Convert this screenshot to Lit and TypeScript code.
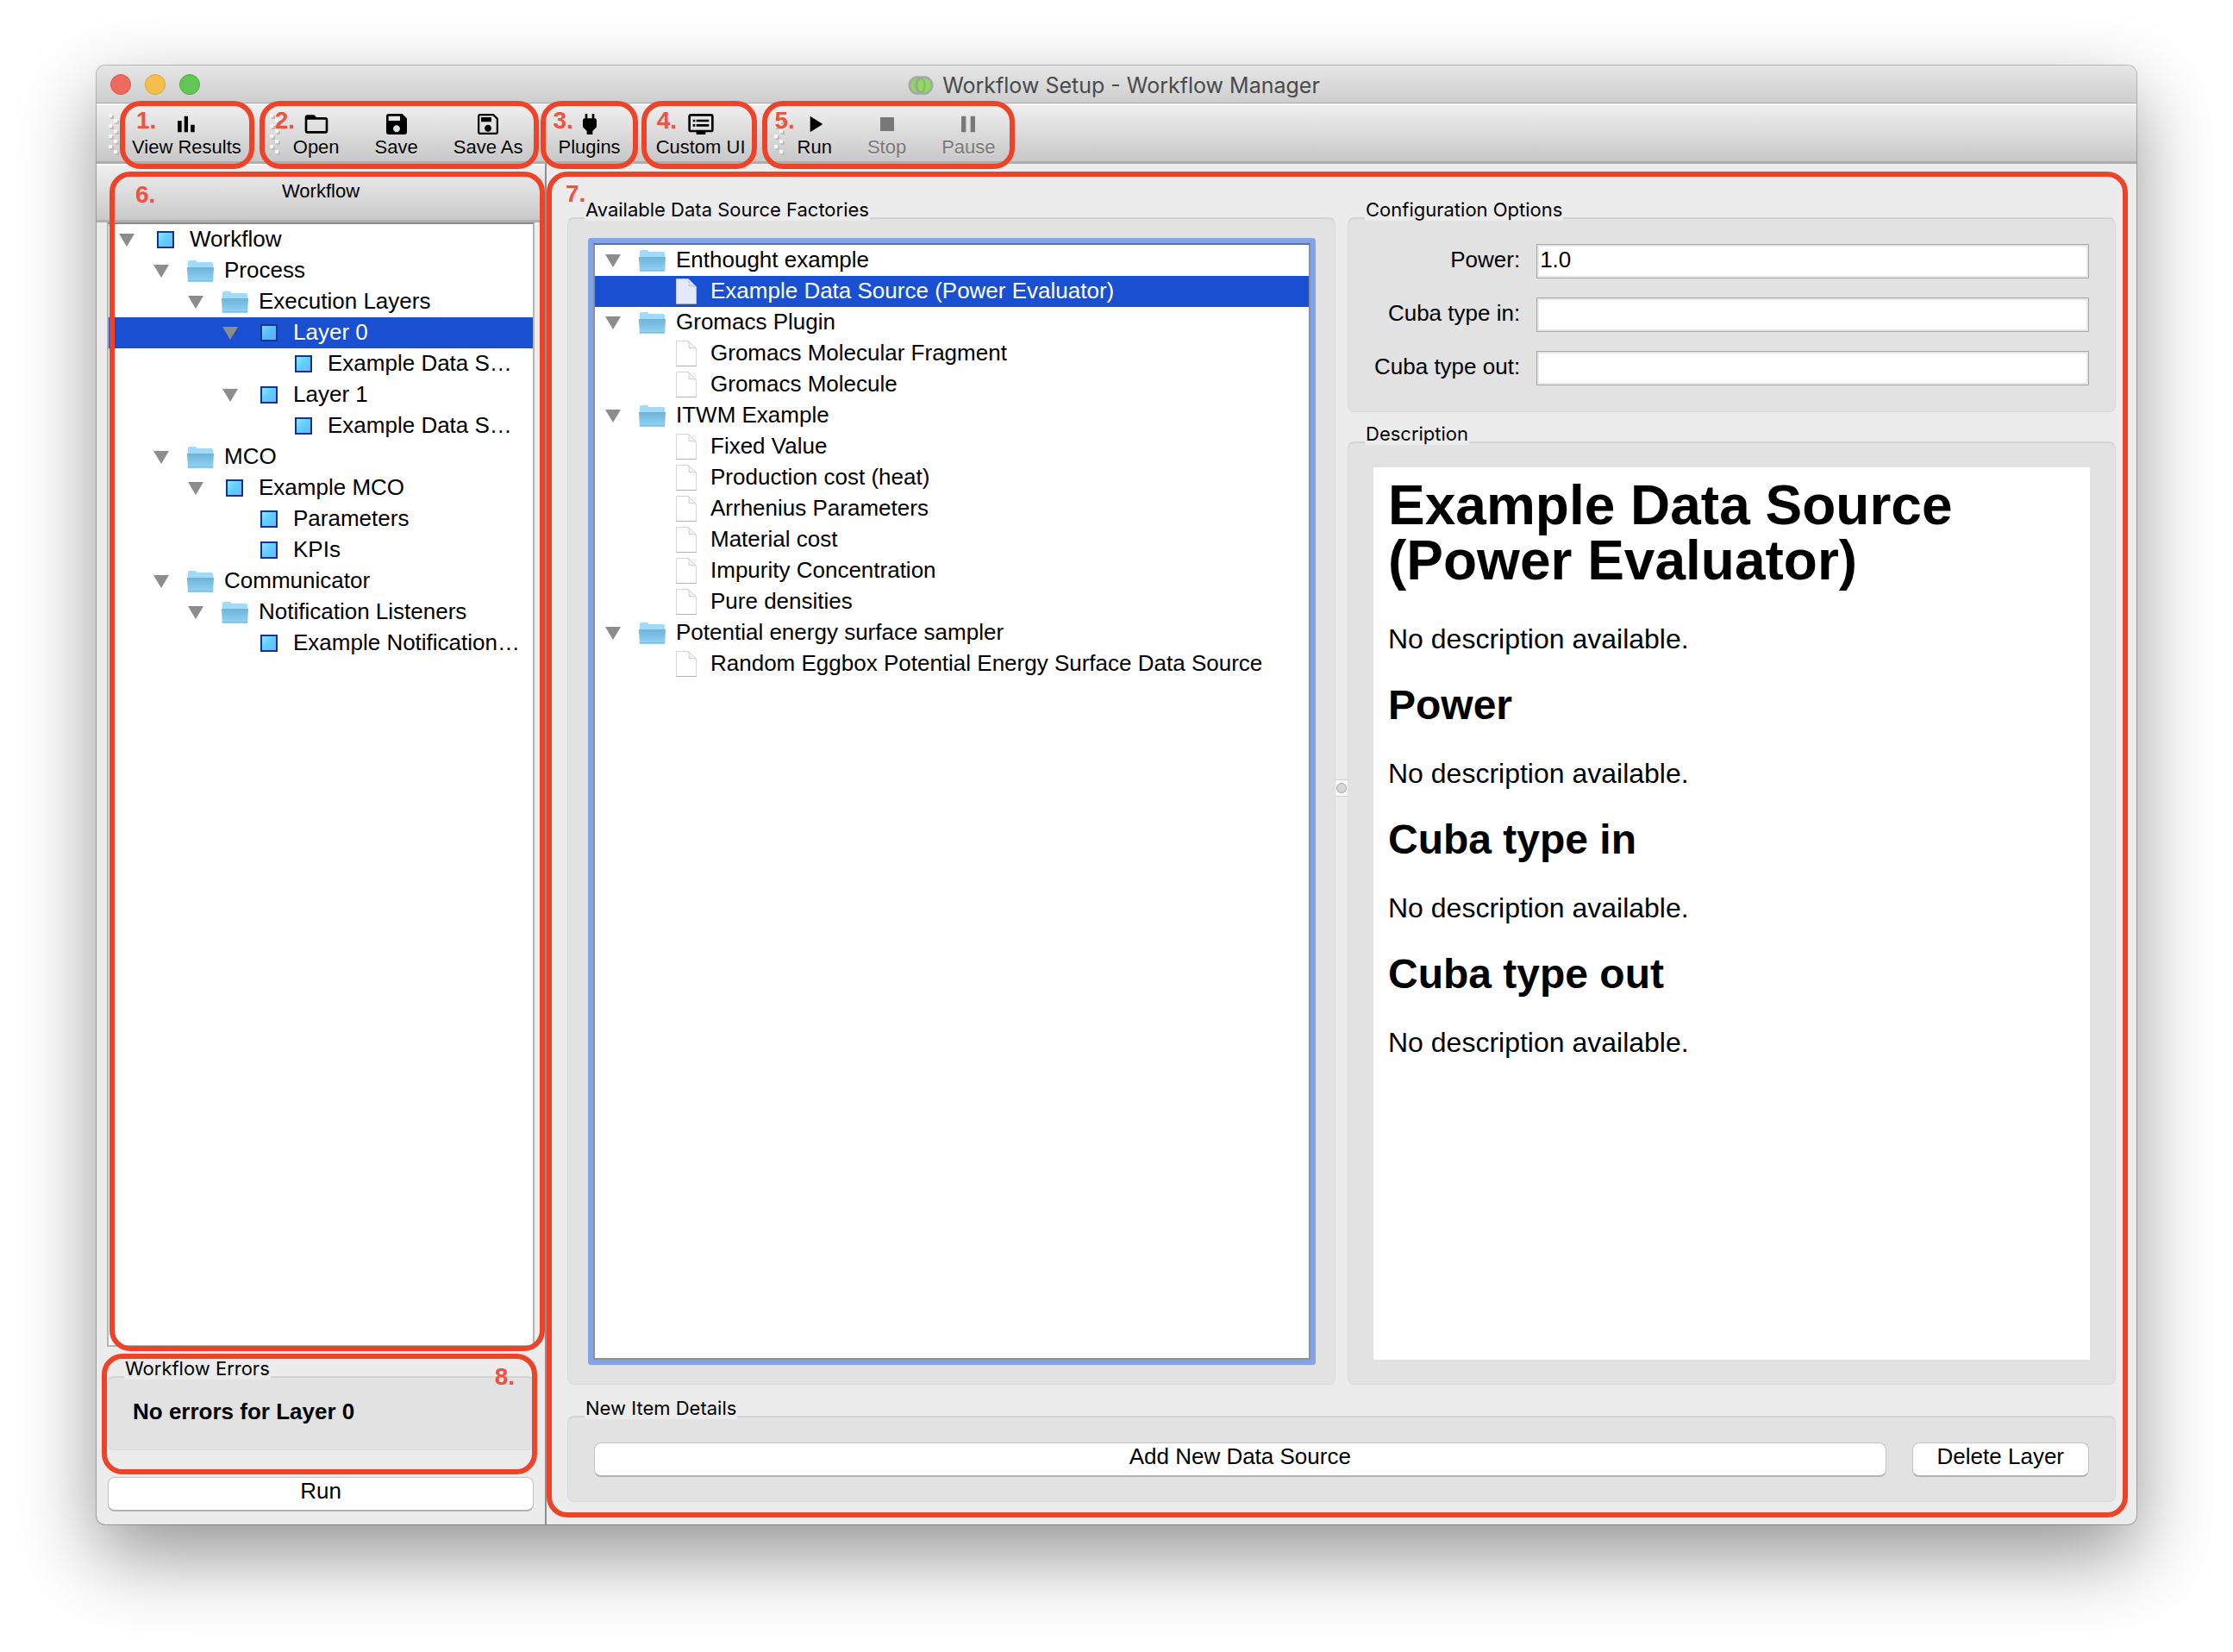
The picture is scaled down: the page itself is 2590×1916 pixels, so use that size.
import { LitElement, html, svg, css, nothing, TemplateResult } from "lit";
import { customElement, property } from "lit/decorators.js";
import { classMap } from "lit/directives/class-map.js";

type IconName = "square" | "folder" | "doc";

interface TreeNode {
  label: string;
  level: number;
  icon: IconName;
  open?: boolean;
  selected?: boolean;
}

const WORKFLOW: TreeNode[] = [
  { label: "Workflow", level: 0, icon: "square", open: true },
  { label: "Process", level: 1, icon: "folder", open: true },
  { label: "Execution Layers", level: 2, icon: "folder", open: true },
  { label: "Layer 0", level: 3, icon: "square", open: true, selected: true },
  { label: "Example Data S…", level: 4, icon: "square" },
  { label: "Layer 1", level: 3, icon: "square", open: true },
  { label: "Example Data S…", level: 4, icon: "square" },
  { label: "MCO", level: 1, icon: "folder", open: true },
  { label: "Example MCO", level: 2, icon: "square", open: true },
  { label: "Parameters", level: 3, icon: "square" },
  { label: "KPIs", level: 3, icon: "square" },
  { label: "Communicator", level: 1, icon: "folder", open: true },
  { label: "Notification Listeners", level: 2, icon: "folder", open: true },
  { label: "Example Notification…", level: 3, icon: "square" },
];

const FACTORIES: TreeNode[] = [
  { label: "Enthought example", level: 0, icon: "folder", open: true },
  { label: "Example Data Source (Power Evaluator)", level: 1, icon: "doc", selected: true },
  { label: "Gromacs Plugin", level: 0, icon: "folder", open: true },
  { label: "Gromacs Molecular Fragment", level: 1, icon: "doc" },
  { label: "Gromacs Molecule", level: 1, icon: "doc" },
  { label: "ITWM Example", level: 0, icon: "folder", open: true },
  { label: "Fixed Value", level: 1, icon: "doc" },
  { label: "Production cost (heat)", level: 1, icon: "doc" },
  { label: "Arrhenius Parameters", level: 1, icon: "doc" },
  { label: "Material cost", level: 1, icon: "doc" },
  { label: "Impurity Concentration", level: 1, icon: "doc" },
  { label: "Pure densities", level: 1, icon: "doc" },
  { label: "Potential energy surface sampler", level: 0, icon: "folder", open: true },
  { label: "Random Eggbox Potential Energy Surface Data Source", level: 1, icon: "doc" },
];

const TREE_ICONS: Record<IconName, TemplateResult> = {
  square: html`<svg class="icon" viewBox="0 0 32 32" aria-hidden="true">
    <defs>
      <linearGradient id="sq" x1="0" y1="0" x2="1" y2="1">
        <stop offset="0" stop-color="#a5e6fb" />
        <stop offset=".45" stop-color="#5fd0ff" />
        <stop offset="1" stop-color="#6fb4fb" />
      </linearGradient>
    </defs>
    <rect x="7" y="7" width="18" height="18" fill="url(#sq)" stroke="#17338f" stroke-width="2" />
  </svg>`,
  folder: html`<svg class="icon" viewBox="0 0 32 32" aria-hidden="true">
    <defs>
      <linearGradient id="fo" x1="0" y1="0" x2="0" y2="1">
        <stop offset="0" stop-color="#6fb2d9" />
        <stop offset="1" stop-color="#8fd3f5" />
      </linearGradient>
    </defs>
    <path d="M2 28.500V6q0-2 2-2h6q1.500 0 2 1l.5 1H29q2 0 2 2v20.500z" fill="#a2dafa" />
    <path d="M1 12h31l-.8 16H1.800z" fill="url(#fo)" />
    <path d="M1.800 27.500h29.400v1H1.800z" fill="#6ea9cb" />
  </svg>`,
  doc: html`<svg class="icon" viewBox="0 0 32 32" aria-hidden="true">
    <path class="page" d="M4.500 1.500h14l9 9v20h-23z" />
    <path class="fold" d="M18.500 1.500q1.500 5 .5 8 4.500-.5 8.500 1z" />
    <path class="base" d="M4.500 30.500h23" />
  </svg>`,
};

const shape = (body: unknown) =>
  html`<svg class="glyph" viewBox="0 0 24 24" aria-hidden="true">${body}</svg>`;

const GLYPHS: Record<string, TemplateResult> = {
  results: shape(svg`<path d="M4.600 9h3.400v10H4.600zM10.300 5h3.200v14h-3.200zM15.900 12.500h3.400V19h-3.400z" />`),
  open: shape(svg`<path d="M20 6h-8l-2-2H4c-1.100 0-2 .9-2 2v12c0 1.100.9 2 2 2h16c1.100 0 2-.9 2-2V8c0-1.100-.9-2-2-2zm0 12H4V8h16z" />`),
  save: shape(svg`<path d="M17 3H5c-1.100 0-2 .9-2 2v14c0 1.100.9 2 2 2h14c1.100 0 2-.9 2-2V7zm-5 16c-1.660 0-3-1.340-3-3s1.340-3 3-3 3 1.340 3 3-1.340 3-3 3zm3-10H5V5h10z" />`),
  saveAs: shape(svg`<path d="M17 3H5c-1.100 0-2 .9-2 2v14c0 1.100.9 2 2 2h14c1.100 0 2-.9 2-2V7zm2.300 16.300H4.700V4.700h11.600l3 3zM12 12.500c-1.660 0-3 1.340-3 3s1.340 3 3 3 3-1.340 3-3-1.340-3-3-3zM6 6h9v4H6z" />`),
  plugins: shape(svg`<path d="M16 7V3h-2v4h-4V3H8v4h-.5C6.500 7 6 7.900 6 9v5.500L9.500 18v3h5v-3l3.500-3.500V9c0-1.100-.5-2-1.500-2z" />`),
  custom: shape(svg`<path d="M21 3H3c-1.100 0-2 .9-2 2v12c0 1.100.9 2 2 2h5v2h8v-2h5c1.100 0 2-.9 2-2V5c0-1.100-.9-2-2-2zm0 14H3V5h18z" /><path d="M8 8h11v2H8zm0 4h11v2H8zM5 8h2v2H5zm0 4h2v2H5z" />`),
  run: shape(svg`<path d="M8 5v14l11-7z" />`),
  stop: shape(svg`<path d="M6 6h12v12H6z" />`),
  pause: shape(svg`<path d="M6 5h4v14H6zm8 0h4v14h-4z" />`),
};

const treeRow = (n: TreeNode) => html`
  <li
    class=${classMap({ row: true, selected: !!n.selected, [`level-${n.level}`]: true })}
    role="treeitem"
    aria-level=${n.level + 1}
    aria-selected=${n.selected ? "true" : "false"}
    aria-expanded=${n.open ? "true" : nothing}
  >
    <svg class="arrow" viewBox="0 0 18 15" aria-hidden="true">
      ${n.open ? svg`<path d="M0 0h18L9 15z" fill="#8c8c8c" />` : nothing}
    </svg>
    ${TREE_ICONS[n.icon]}
    <span class="label">${n.label}</span>
  </li>
`;

const treeStyles = css`
  .tree {
    margin: 0;
    padding: 0;
    list-style: none;
    background: #fff;
    box-sizing: border-box;
  }
  .row {
    display: flex;
    align-items: center;
    height: 36px;
    padding-left: 12px;
    white-space: nowrap;
    font-size: 26px;
  }
  .level-1 { padding-left: 52px; }
  .level-2 { padding-left: 92px; }
  .level-3 { padding-left: 132px; }
  .level-4 { padding-left: 172px; }
  .selected { background: #1950d1; color: #fff; }
  .selected .icon { opacity: 0.88; }
  .arrow { flex: none; width: 18px; height: 15px; margin-right: 20px; }
  .icon { flex: none; width: 32px; height: 32px; margin-right: 12px; }
  .label { line-height: 34px; padding-bottom: 2px; }
  .page { fill: #fff; stroke: #d4d4d4; stroke-width: 1; }
  .fold { fill: #f8f8f8; stroke: #cfcfcf; stroke-width: 1; }
  .base { fill: none; stroke: #b0b0b0; stroke-width: 1; }
`;

@customElement("group-box")
class GroupBox extends LitElement {
  @property() heading = "";

  static styles = css`
    :host {
      display: flex;
      flex-direction: column;
      position: relative;
      min-width: 0;
    }
    .heading {
      position: relative;
      z-index: 1;
      align-self: flex-start;
      margin: 0 0 -4px 20px;
      padding: 0 1px;
      background: #ececec;
      font: 400 22px/26px Inter, "Liberation Sans", sans-serif;
    }
    .frame {
      flex: 1;
      display: flex;
      flex-direction: column;
      min-height: 0;
      box-sizing: border-box;
      border: 1px solid #dadada;
      border-top: 2px solid #d3d3d3;
      border-radius: 8px;
      background: #e2e2e2;
    }
  `;

  render() {
    return html`
      <h2 class="heading">${this.heading}</h2>
      <div class="frame"><slot></slot></div>
    `;
  }
}

@customElement("app-root")
class AppRoot extends LitElement {
  static styles = [
    treeStyles,
    css`
      :host {
        display: flex;
        box-sizing: border-box;
        min-height: 100vh;
        padding: 76px 112px 148px;
        overflow: hidden;
        background: #fff;
        color: #000;
        font-family: "Liberation Sans", Arial, sans-serif;
      }
      .window {
        flex: 1;
        min-width: 0;
        display: flex;
        flex-direction: column;
        border-radius: 10px;
        background: #ececec;
        box-shadow: 0 0 0 1px rgba(0, 0, 0, 0.24), 0 36px 90px rgba(0, 0, 0, 0.42);
      }
      .titlebar {
        display: grid;
        grid-template-columns: 1fr auto 1fr;
        align-items: center;
        height: 44px;
        box-sizing: border-box;
        padding: 0 16px;
        border-bottom: 1px solid #a6a6a6;
        border-radius: 10px 10px 0 0;
        background: linear-gradient(#e6e6e6, #cecece);
      }
      .lights { display: flex; gap: 16px; }
      .light {
        width: 24px;
        height: 24px;
        padding: 0;
        border: 1px solid #d9564b;
        border-radius: 50%;
        background: #ee6a5f;
      }
      .light.min { background: #f5bf4f; border-color: #dca03b; }
      .light.max { background: #62c655; border-color: #4fa73f; }
      .title {
        display: flex;
        align-items: center;
        gap: 10px;
        margin: 0;
        padding: 2px 6px 0 0;
        color: #4a4a4a;
        font: 400 25px/32px Inter, "Liberation Sans", sans-serif;
      }
      .logo { width: 30px; height: 24px; }

      .toolbar {
        display: flex;
        height: 70px;
        box-sizing: border-box;
        padding-left: 14px;
        border-top: 2px solid #fafafa;
        border-bottom: 3px solid #adadad;
        background: linear-gradient(#efefef, #c8c8c8);
      }
      .grip { flex: none; width: 13px; height: 50px; margin: 10px 0 0; }
      .cluster + .grip { margin-left: 19px; }
      .cluster { position: relative; display: flex; gap: 13px; }
      .cluster + .cluster { margin-left: 13px; }
      .tool {
        display: flex;
        flex-direction: column;
        align-items: center;
        margin: 0;
        padding: 6px 14px 0;
        border: 0;
        background: none;
        color: #000;
        font: 22px/22px "Liberation Sans", Arial, sans-serif;
        text-shadow: 0 1px 0 rgba(255, 255, 255, 0.6);
      }
      .tool:disabled { color: #787878; }
      .glyph { width: 32px; height: 32px; fill: currentColor; }

      .ring {
        position: absolute;
        z-index: 5;
        box-sizing: border-box;
        border: 6px solid #ee4328;
        border-radius: 24px;
        pointer-events: none;
        color: #f05140;
        font: 700 28px/28px "Liberation Sans", Arial, sans-serif;
      }
      .cluster .ring { top: -5px; bottom: -9px; padding-top: 3px; }
      .cluster .r1 { left: 0; right: -1px; padding-left: 13px; }
      .cluster .r2 { left: -25px; right: -5px; padding-left: 12px; }
      .cluster .r3 { left: -6px; right: -6px; padding-left: 8px; }
      .cluster .r4 { left: -3px; right: 1px; padding-left: 12px; }
      .cluster .r5 { left: -27px; right: -8px; padding-left: 9px; }
      .r6 { inset: 9px 0 -5px 15px; padding: 7px 24px; }
      .r7 { inset: 9px 10px 8px 0; padding: 6px 16px; }
      .r8 { inset: -4px -3px -28px -6px; padding: 7px 20px; text-align: right; }

      .body { flex: 1; display: flex; min-height: 0; }
      .side {
        flex: 0 0 520px;
        display: flex;
        flex-direction: column;
        border-right: 2px solid #8e8e8e;
      }
      .workflow { position: relative; flex: 1; display: flex; flex-direction: column; }
      .side-head {
        height: 68px;
        box-sizing: border-box;
        margin: 0;
        padding-top: 16px;
        border-top: 2px solid #fafafa;
        border-bottom: 3px solid #b0b0b0;
        background: linear-gradient(#efefef, #c9c9c9);
        text-align: center;
        font-weight: 400;
        font-size: 22px;
        line-height: 28px;
      }
      .side-tree {
        flex: 1;
        margin: 0 12px;
        border: 2px solid #b5b5b5;
        border-top-color: #8c8c8c;
      }
      .errors { margin: 12px 12px 0; }
      .message {
        margin: 0;
        padding: 21px 29px 26px;
        font-weight: 700;
        font-size: 26px;
        line-height: 36px;
      }
      .push {
        height: 40px;
        box-sizing: border-box;
        padding: 0 28px 8px;
        border: 1px solid #c3c3c3;
        border-bottom: 2px solid #b2b2b2;
        border-radius: 8px;
        background: #fff;
        color: #000;
        font: 26px/30px "Liberation Sans", Arial, sans-serif;
      }
      .side .push { margin: 31px 13px 15px; }

      .main {
        position: relative;
        flex: 1;
        min-width: 0;
        display: flex;
        flex-direction: column;
        gap: 14px;
        padding: 40px 24px 26px;
      }
      .split { flex: 1; display: grid; grid-template-columns: 1fr 14px 1fr; }
      .splitter {
        align-self: center;
        width: 14px;
        height: 20px;
        margin-bottom: 8px;
        background: #fafafa;
      }
      .right { display: flex; flex-direction: column; gap: 12px; min-width: 0; }
      .fill { flex: 1; }
      .factory-tree {
        flex: 1;
        margin: 28px 28px 28px 29px;
        border: 2px solid #8a8f9c;
        border-top-color: #5870ad;
        box-shadow: 0 0 0 6px #84a4e8;
        border-radius: 1px;
      }
      .form {
        display: grid;
        grid-template-columns: auto 1fr;
        gap: 22px 19px;
        padding: 29px 30px 30px;
        font-size: 26px;
      }
      .caption { height: 40px; line-height: 36px; text-align: right; }
      .field {
        width: 100%;
        height: 40px;
        box-sizing: border-box;
        padding: 0 4px 4px 3px;
        border: 1px solid #a8a8a8;
        border-radius: 0;
        background: #fff;
        box-shadow: inset 0 0 0 2px #e6e6e6;
        color: #000;
        font: 26px "Liberation Sans", Arial, sans-serif;
      }
      .doc {
        flex: 1;
        margin: 28px 29px;
        padding: 12px 17px;
        background: #fff;
      }
      .doc h3 { margin: 0; font-size: 64px; line-height: 64px; max-width: 760px; }
      .doc h4 { margin: 35px 0 37px; font-size: 48px; line-height: 48px; }
      .doc p { margin: 0; font-size: 32px; line-height: 36px; }
      .doc h3 + p { margin-top: 41px; }
      .actions { display: flex; gap: 30px; padding: 29px 30px 28px; }
      .actions .wide { flex: 1; }
    `,
  ];

  private grip() {
    return html`<svg class="grip" viewBox="0 0 13 50" aria-hidden="true">
      ${[0, 1, 2, 3, 4, 5, 6, 7].map((i) => {
        const x = i % 2 ? 6 : 0;
        const y = i * 6;
        return svg`
          <rect x=${x + 2} y=${y + 2} width="4" height="4" fill="#bdbdbd" />
          <rect x=${x} y=${y} width="4" height="4" fill="#f6f6f6" />`;
      })}
    </svg>`;
  }

  private tool(glyph: string, label: string, disabled = false) {
    return html`<button class="tool" type="button" ?disabled=${disabled}>
      ${GLYPHS[glyph]}<span>${label}</span>
    </button>`;
  }

  render() {
    return html`
      <div class="window">
        <header class="titlebar">
          <div class="lights">
            <button class="light" type="button" aria-label="Close"></button>
            <button class="light min" type="button" aria-label="Minimize"></button>
            <button class="light max" type="button" aria-label="Zoom"></button>
          </div>
          <h1 class="title">
            <svg class="logo" viewBox="0 0 30 24" aria-hidden="true">
              <circle cx="11.500" cy="12" r="9.500" fill="#8add5a" stroke="#a6aaa4" stroke-width="3" />
              <circle cx="18.500" cy="12" r="9.500" fill="#8add5a" stroke="#a6aaa4" stroke-width="3" />
              <ellipse cx="15" cy="12" rx="4.500" ry="8" fill="#8add5a" stroke="#8fae80" stroke-width="2" />
            </svg>
            Workflow Setup - Workflow Manager
          </h1>
        </header>

        <div class="toolbar" role="toolbar">
          ${this.grip()}
          <div class="cluster">
            ${this.tool("results", "View Results")}
            <span class="ring r1">1.</span>
          </div>
          ${this.grip()}
          <div class="cluster">
            ${this.tool("open", "Open")} ${this.tool("save", "Save")} ${this.tool("saveAs", "Save As")}
            <span class="ring r2">2.</span>
          </div>
          <div class="cluster">
            ${this.tool("plugins", "Plugins")}
            <span class="ring r3">3.</span>
          </div>
          <div class="cluster">
            ${this.tool("custom", "Custom UI")}
            <span class="ring r4">4.</span>
          </div>
          ${this.grip()}
          <div class="cluster">
            ${this.tool("run", "Run")} ${this.tool("stop", "Stop", true)} ${this.tool("pause", "Pause", true)}
            <span class="ring r5">5.</span>
          </div>
        </div>

        <div class="body">
          <aside class="side">
            <div class="workflow">
              <h2 class="side-head">Workflow</h2>
              <ul class="tree side-tree" role="tree" aria-label="Workflow">
                ${WORKFLOW.map(treeRow)}
              </ul>
              <span class="ring r6">6.</span>
            </div>
            <group-box class="errors" heading="Workflow Errors">
              <p class="message">No errors for Layer 0</p>
              <span class="ring r8">8.</span>
            </group-box>
            <button class="push" type="button">Run</button>
          </aside>

          <main class="main">
            <span class="ring r7">7.</span>
            <div class="split">
              <group-box heading="Available Data Source Factories">
                <ul class="tree factory-tree" role="tree" aria-label="Available Data Source Factories">
                  ${FACTORIES.map(treeRow)}
                </ul>
              </group-box>
              <svg class="splitter" viewBox="0 0 14 20" aria-hidden="true">
                <path d="M0 .5h14M0 19.500h14" stroke="#d0d0d0" />
                <circle cx="7" cy="10" r="5.500" fill="#d6d6d6" stroke="#a9a9a9" />
              </svg>
              <div class="right">
                <group-box heading="Configuration Options">
                  <form class="form">
                    <label class="caption" for="power">Power:</label>
                    <input class="field" id="power" type="text" value="1.0" />
                    <label class="caption" for="cuba-in">Cuba type in:</label>
                    <input class="field" id="cuba-in" type="text" />
                    <label class="caption" for="cuba-out">Cuba type out:</label>
                    <input class="field" id="cuba-out" type="text" />
                  </form>
                </group-box>
                <group-box class="fill" heading="Description">
                  <article class="doc">
                    <h3>Example Data Source (Power Evaluator)</h3>
                    <p>No description available.</p>
                    <h4>Power</h4>
                    <p>No description available.</p>
                    <h4>Cuba type in</h4>
                    <p>No description available.</p>
                    <h4>Cuba type out</h4>
                    <p>No description available.</p>
                  </article>
                </group-box>
              </div>
            </div>
            <group-box heading="New Item Details">
              <div class="actions">
                <button class="push wide" type="button">Add New Data Source</button>
                <button class="push" type="button">Delete Layer</button>
              </div>
            </group-box>
          </main>
        </div>
      </div>
    `;
  }
}
